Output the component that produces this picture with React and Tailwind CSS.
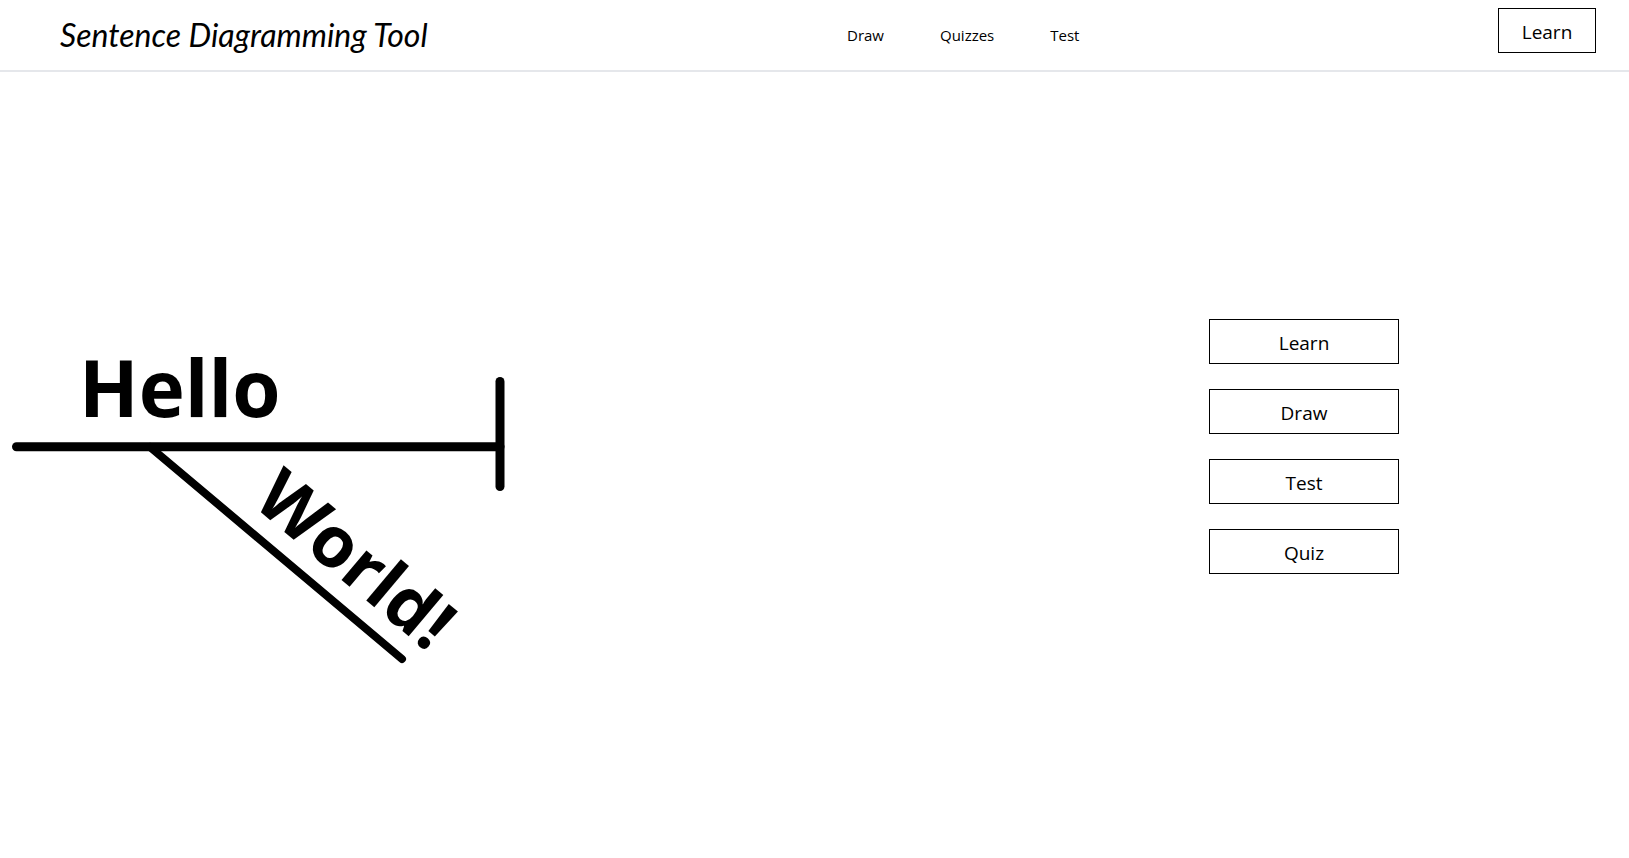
import React from "react";

const navLinks = ["Draw", "Quizzes", "Test"];
const actions = ["Learn", "Draw", "Test", "Quiz"];

const Diagram = () => (
  <svg width="520" height="370" viewBox="0 0 520 370" className="block">
    <g stroke="#000" strokeLinecap="round" fill="none">
      <line x1="16.5" y1="126.7" x2="500" y2="126.7" strokeWidth="9" />
      <line x1="500" y1="61.5" x2="500" y2="166.5" strokeWidth="9" />
      <line x1="150" y1="127" x2="402" y2="339" strokeWidth="8" />
    </g>
    <text
      x="79"
      y="97"
      fontFamily="'Open Sans', sans-serif"
      fontWeight="700"
      fontSize="78"
      fill="#000"
    >
      Hello
    </text>
    <text
      x="251"
      y="184"
      transform="rotate(40 251 184)"
      fontFamily="'Open Sans', sans-serif"
      fontWeight="700"
      fontSize="71"
      fill="#000"
    >
      World!
    </text>
  </svg>
);

const App = () => {
  return (
    <div className="min-h-[858px] bg-white text-black font-['Open_Sans',sans-serif]">
      {/* Header */}
      <header className="flex h-[72px] border-b-2 border-[#e5e7eb]">
        <h1 className="ml-[60px] mt-[16px] w-[787px] text-[32px] leading-[38px] italic font-['Lato',sans-serif]">
          Sentence Diagramming Tool
        </h1>
        <nav className="mt-[24px] flex h-[22px] gap-[56px] text-[15px] leading-[22px]">
          {navLinks.map((link) => (
            <a key={link} href="#" className="text-black">
              {link}
            </a>
          ))}
        </nav>
        <button className="ml-auto mr-[33px] mt-[8px] h-[45px] w-[98px] border border-black pt-[4px] text-[19px]">
          Learn
        </button>
      </header>

      {/* Main */}
      <main className="flex">
        <div className="mt-[248px]">
          <Diagram />
        </div>
        <div className="ml-auto mr-[230px] mt-[247px] flex flex-col gap-[25px]">
          {actions.map((label) => (
            <button
              key={label}
              className="h-[45px] w-[190px] border border-black pt-[3px] text-[19px]"
            >
              {label}
            </button>
          ))}
        </div>
      </main>
    </div>
  );
};

export default App;
